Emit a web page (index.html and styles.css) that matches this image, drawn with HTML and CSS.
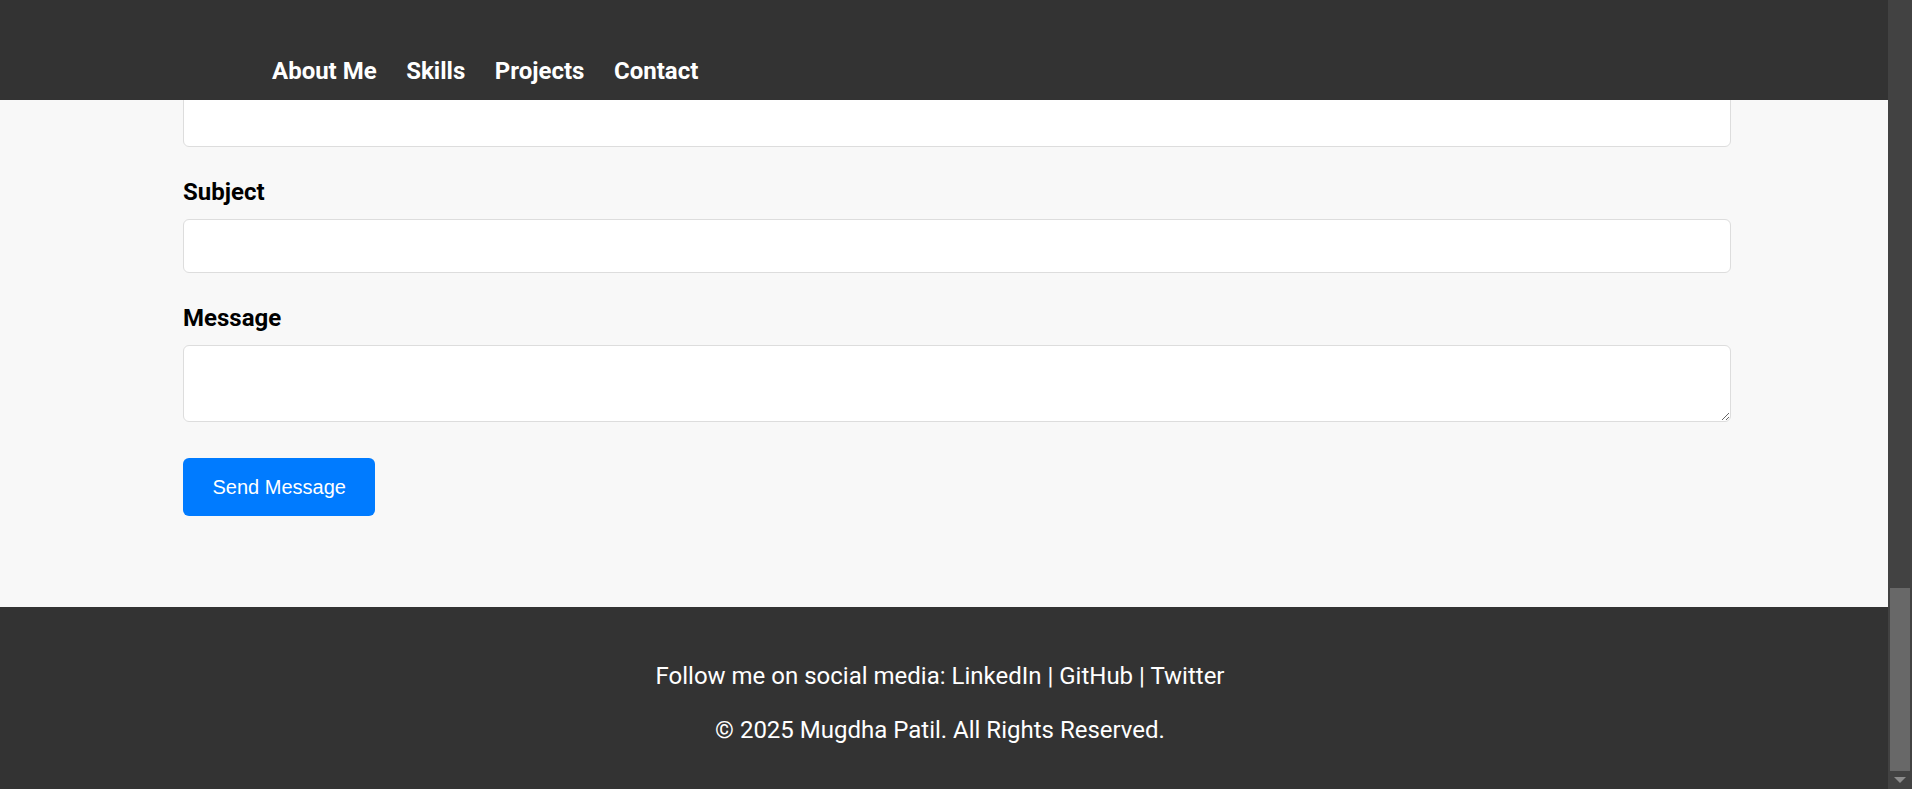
FILE: index.html
```html
<!DOCTYPE html>
<html lang="en">
<head>
<meta charset="utf-8">
<title>Mugdha Patil - Contact</title>
<link rel="stylesheet" href="styles.css">
</head>
<body>
<div class="app">
  <div class="page">
    <header class="site-header">
      <nav>
        <ul class="nav-list">
          <li><a href="#about">About Me</a></li>
          <li><a href="#skills">Skills</a></li>
          <li><a href="#projects">Projects</a></li>
          <li><a href="#contact">Contact</a></li>
        </ul>
      </nav>
    </header>
    <main class="contact" id="contact">
      <form class="contact-form">
        <div class="field">
          <input type="email" id="email" aria-label="Email">
        </div>
        <div class="field">
          <label for="subject">Subject</label>
          <input type="text" id="subject">
        </div>
        <div class="field field-last">
          <label for="message">Message</label>
          <textarea id="message"></textarea>
        </div>
        <button type="submit" class="btn">Send Message</button>
      </form>
    </main>
    <footer class="site-footer">
      <p>Follow me on social media: <a href="#">LinkedIn</a> | <a href="#">GitHub</a> | <a href="#">Twitter</a></p>
      <p>&copy; 2025 Mugdha Patil. All Rights Reserved.</p>
    </footer>
  </div>
  <div class="scrollbar" aria-hidden="true">
    <div class="scrollbar-thumb"></div>
    <div class="scrollbar-arrow">
      <svg width="12" height="6" viewBox="0 0 12 6"><path d="M0 0H12L6 6Z" fill="#8c8c8c"/></svg>
    </div>
  </div>
</div>
</body>
</html>
```
FILE: styles.css
```css
html, body {
  margin: 0;
  height: 100%;
}

body {
  font-family: Roboto, "Liberation Sans", Arial, sans-serif;
  background: #f8f8f8;
  color: #000;
}

.app {
  display: grid;
  grid-template-columns: 1fr 24px;
  height: 100vh;
  overflow: hidden;
}

.page {
  display: flex;
  flex-direction: column;
  min-width: 0;
  overflow: hidden;
}

.site-header {
  position: fixed;
  top: 0;
  left: 0;
  right: 24px;
  height: 100px;
  box-sizing: border-box;
  background: #333;
  display: flex;
  align-items: flex-end;
  padding: 0 0 15px 272px;
  z-index: 10;
}

.nav-list {
  list-style: none;
  margin: 0;
  padding: 0;
  display: flex;
  gap: 29.6px;
}

.nav-list a {
  color: #fff;
  text-decoration: none;
  font-weight: 700;
  font-size: 24px;
}

.contact {
  padding: 93px 183px 90.5px;
  background: #f8f8f8;
}

.field {
  margin-bottom: 31px;
}

.field-last {
  margin-bottom: 36px;
}

.field label {
  display: block;
  font-weight: 700;
  font-size: 24px;
  margin-bottom: 13px;
  color: #000;
}

.field input,
.field textarea {
  display: block;
  width: 100%;
  margin: 0;
  padding: 12px;
  border: 1px solid #ddd;
  border-radius: 6px;
  background: #fff;
  font: 16px/28px Roboto, "Liberation Sans", sans-serif;
  color: #000;
}

.field textarea {
  height: 51px;
}

.btn {
  display: block;
  padding: 17px 29.5px;
  line-height: 24px;
  font-size: 20px;
  font-family: "Liberation Sans", Arial, sans-serif;
  background: #007bff;
  color: #fff;
  border: 0;
  border-radius: 6px;
}

.site-footer {
  flex: 1;
  background: #333;
  color: #fff;
  text-align: center;
  padding: 30px 8px 0 0;
}

.site-footer p {
  margin: 24px 0;
  font-size: 24px;
  line-height: 30.5px;
}

.site-footer a {
  color: #fff;
  text-decoration: none;
}

.scrollbar {
  display: flex;
  flex-direction: column;
  justify-content: flex-end;
  background: #424242;
}

.scrollbar-thumb {
  height: 183px;
  margin: 0 2px;
  background: #686868;
}

.scrollbar-arrow {
  height: 18px;
  display: flex;
  align-items: center;
  justify-content: center;
}

.scrollbar-arrow svg {
  display: block;
}
```
